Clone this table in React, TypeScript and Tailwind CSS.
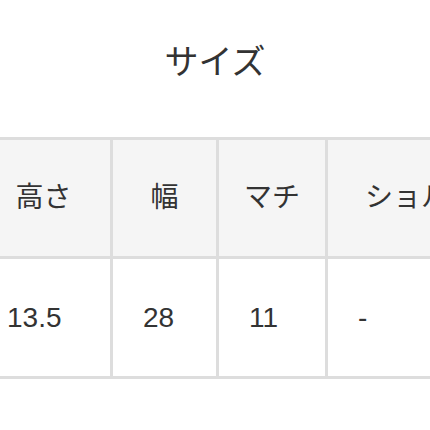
const headers = ["高さ", "幅", "マチ", "ショルダー"];
const values = ["13.5", "28", "11", "-"];
const widths = ["w-[136px]", "w-[106px]", "w-[109px]", "w-[217px]"];

export default function App() {
  return (
    <div
      className="w-[430px] h-[430px] overflow-hidden bg-white text-[#333333]"
      style={{ fontFamily: '"Liberation Sans", "Noto Sans CJK JP", sans-serif' }}
    >
      <h2 className="h-[137px] pt-[37px] text-center text-[34px] leading-[50px] font-normal">
        サイズ
      </h2>
      <div className="ml-[-26px] w-max border-t-[3px] border-l-[3px] border-[#dddddd]">
        <div className="flex bg-[#f5f5f5]">
          {headers.map((h, i) => (
            <div
              key={h}
              className={`${widths[i]} h-[119px] shrink-0 flex items-center justify-center border-r-[3px] border-b-[3px] border-[#dddddd] text-[28px] whitespace-nowrap`}
            >
              {h}
            </div>
          ))}
        </div>
        <div className="flex bg-white">
          {values.map((v, i) => (
            <div
              key={i}
              className={`${widths[i]} h-[120px] shrink-0 flex items-center pl-[30px] border-r-[3px] border-b-[3px] border-[#dddddd] text-[28px]`}
            >
              {v}
            </div>
          ))}
        </div>
      </div>
    </div>
  );
}
